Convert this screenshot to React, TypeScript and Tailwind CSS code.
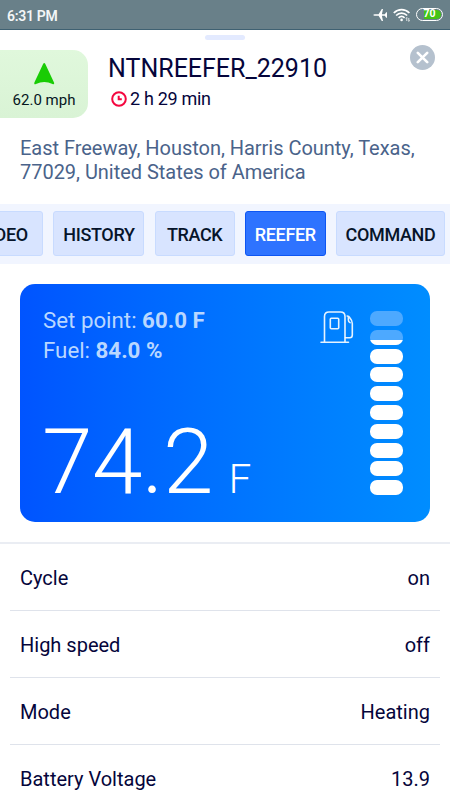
const tabs = [
  { label: "VIDEO", box: "w-[80px]", active: false },
  { label: "HISTORY", box: "w-[91px]", active: false },
  { label: "TRACK", box: "w-[80px]", active: false },
  { label: "REEFER", box: "w-[81px]", active: true },
  { label: "COMMAND", box: "w-[109px]", active: false },
];

const rows = [
  { label: "Cycle", value: "on" },
  { label: "High speed", value: "off" },
  { label: "Mode", value: "Heating" },
  { label: "Battery Voltage", value: "13.9" },
];

const fuelCells = [0, 0.33, 1, 1, 1, 1, 1, 1, 1, 1];

function StatusBar() {
  return (
    <div className="flex h-[30px] shrink-0 items-center justify-between border-b border-[#3f6172] bg-[#698089] pr-[7px] pl-[7px] text-white">
      <span className="mt-[2px] text-[14px] leading-none font-semibold tracking-[-0.3px] text-[#f3f6f7]">6:31 PM</span>
      <div className="flex items-center">
        <svg width="15" height="12" viewBox="0 0 15 12" fill="#fff">
          <path d="M0 6 L1.5 5.2 H5.6 L8.8 0 H10 L8.9 5.2 H11.8 L13.2 3.2 H14 V8.8 H13.2 L11.8 6.8 H8.9 L10 12 H8.8 L5.6 6.8 H1.5 Z" />
        </svg>
        <svg className="ml-[5px]" width="19" height="14" viewBox="0 0 19 14" fill="none" stroke="#fff" strokeWidth="1.7">
          <path d="M.8 5 C5.2 .4 12 .4 16.4 5 M3.1 7.5 C6.3 4.2 10.9 4.2 14.1 7.5 M5.6 9.9 C7.4 8.1 9.8 8.1 11.6 9.9" />
          <circle cx="8.6" cy="11.9" r="1.3" fill="#fff" stroke="none" />
          <path d="M13.8 13 V9.5 M12.9 10.5 L13.8 9.5 M15.8 10 V13.4 M16.6 12.4 L15.8 13.4" strokeWidth=".8" />
        </svg>
        <div className="ml-[4px] flex h-[13px] w-[27px] rounded-full border border-white p-[1px]">
          <div className="flex flex-1 items-center justify-center rounded-full bg-linear-to-r from-[#698089] from-25% to-[#43c414] to-25% text-[10.5px] leading-none font-bold">
            70
          </div>
        </div>
      </div>
    </div>
  );
}

function VehicleHeader() {
  return (
    <div className="flex h-[88px] shrink-0 items-start">
      <div className="mt-[10px] flex h-[68px] w-[88px] flex-col items-center rounded-r-[15px] bg-linear-to-b from-[#e0f8dc] to-[#d9f3d5] pt-[13px]">
        <svg width="21" height="22" viewBox="0 0 21 22" fill="#19cc05">
          <path d="M9.2 .8 Q10.3 -.8 11.2 .8 L20 19.5 Q20.7 21.9 18.5 21.1 Q10.3 17 2 21.1 Q-.2 21.9 .4 19.5 Z" />
        </svg>
        <span className="mt-[7px] text-[15px] leading-[16px] whitespace-nowrap text-[#05161e]">62.0 mph</span>
      </div>
      <div className="ml-[20px] flex flex-1 flex-col pt-[12px]">
        <h1 className="text-[25px] leading-[34px] whitespace-nowrap text-[#05053b]">NTNREEFER_22910</h1>
        <div className="mt-[2px] flex items-center pl-[3px]">
          <svg width="16" height="16" viewBox="0 0 16 16" fill="none" stroke="#f4073f" strokeWidth="2">
            <circle cx="8" cy="8" r="6.8" />
            <path d="M7.7 4.7 V8.3 H10.8" />
          </svg>
          <span className="ml-[3px] text-[18px] leading-[22px] tracking-[-0.3px] whitespace-nowrap text-[#05053b]">2 h 29 min</span>
        </div>
      </div>
      <button className="mt-[5px] mr-[15px] flex size-[25px] items-center justify-center rounded-full bg-[#b5c1ce]">
        <svg width="13" height="13" viewBox="0 0 13 13" stroke="#fff" strokeWidth="2.6" strokeLinecap="round">
          <path d="M1.8 1.8 L11.2 11.2 M11.2 1.8 L1.8 11.2" />
        </svg>
      </button>
    </div>
  );
}

function FuelPump() {
  return (
    <svg width="34" height="33" viewBox="0 0 34 33" fill="none" stroke="#fff" strokeOpacity=".9" strokeWidth="1.6" strokeLinecap="round" strokeLinejoin="round">
      <path d="M1 31.3 H28.5 M4.5 31 V5.5 Q4.5 1 9 1 H20.5 Q25 1 25 5.5 V31" />
      <rect x="10.3" y="7.2" width="8.4" height="10.6" rx="1" />
      <path d="M27.2 5 Q28.8 5 30 7 Q32.3 9.6 32.3 12.5 V24 Q32.3 26.8 29.8 26.8 H25.5 M28.4 6 V9 Q28.4 11 30 11.6" />
    </svg>
  );
}

function ReeferCard() {
  return (
    <section className="mx-[20px] mt-[20px] flex h-[238px] shrink-0 justify-between rounded-[15px] bg-linear-to-r from-[#0054ff] to-[#008dff] pr-[27px] pl-[23px]">
      <div className="flex flex-col pt-[21px]">
        <div className="text-[22.3px] leading-[30px] whitespace-nowrap text-[#b9d7ff]">
          <p>
            Set point: <b>60.0 F</b>
          </p>
          <p>
            Fuel: <b>84.0 %</b>
          </p>
        </div>
        <div className="mt-[47px] -ml-[1px] flex items-baseline font-light text-white">
          <span className="text-[91px] leading-[100px] tracking-[-0.6px]">74.2</span>
          <span className="ml-[16px] text-[40px] leading-none">F</span>
        </div>
      </div>
      <div className="flex items-start">
        <div className="mt-[27px] mr-[16px]">
          <FuelPump />
        </div>
        <div className="mt-[27px] flex flex-col gap-[3.8px]">
          {fuelCells.map((level, i) => (
            <div key={i} className="flex h-[15px] w-[33px] flex-col justify-end overflow-hidden rounded-[7px] bg-[#4da9ff]">
              <div className="bg-white" style={{ height: `${level * 100}%` }} />
            </div>
          ))}
        </div>
      </div>
    </section>
  );
}

export default function App() {
  return (
    <div className="flex h-[800px] w-[450px] flex-col overflow-hidden bg-white font-[Roboto,'Liberation_Sans',sans-serif]">
      <StatusBar />
      <div className="flex h-[10px] shrink-0 items-end justify-center">
        <div className="h-[5px] w-[40px] rounded-full bg-[#e3eaff]" />
      </div>
      <VehicleHeader />
      <p className="h-[76px] shrink-0 pt-[8px] pl-[20px] text-[20px] leading-[24px] tracking-[-0.03px] text-[#4a638a]">
        East Freeway, Houston, Harris County, Texas,
        <br />
        77029, United States of America
      </p>
      <nav className="flex h-[60px] shrink-0 items-start justify-end gap-[10.2px] bg-[#f1f5ff] pt-[7px] pr-[5px]">
        {tabs.map((t) => (
          <button
            key={t.label}
            className={`h-[45px] shrink-0 rounded-[3px] border pt-[2px] text-[18px] font-medium tracking-[-0.35px] whitespace-nowrap ${t.box} ${
              t.active ? "border-[#0d55f2] bg-[#2e73ff] text-white" : "border-[#c8dbff] bg-[#d8e4ff] text-[#06142a]"
            }`}
          >
            {t.label}
          </button>
        ))}
      </nav>
      <ReeferCard />
      <dl className="mt-[20px] shrink-0 border-t-2 border-[#eaedf3]">
        {rows.map((r) => (
          <div
            key={r.label}
            className="mx-[10px] flex h-[67px] items-center justify-between border-b border-[#dfe3eb] px-[10px] pt-[2px] text-[20px] text-[#05053b]"
          >
            <dt>{r.label}</dt>
            <dd>{r.value}</dd>
          </div>
        ))}
      </dl>
    </div>
  );
}
